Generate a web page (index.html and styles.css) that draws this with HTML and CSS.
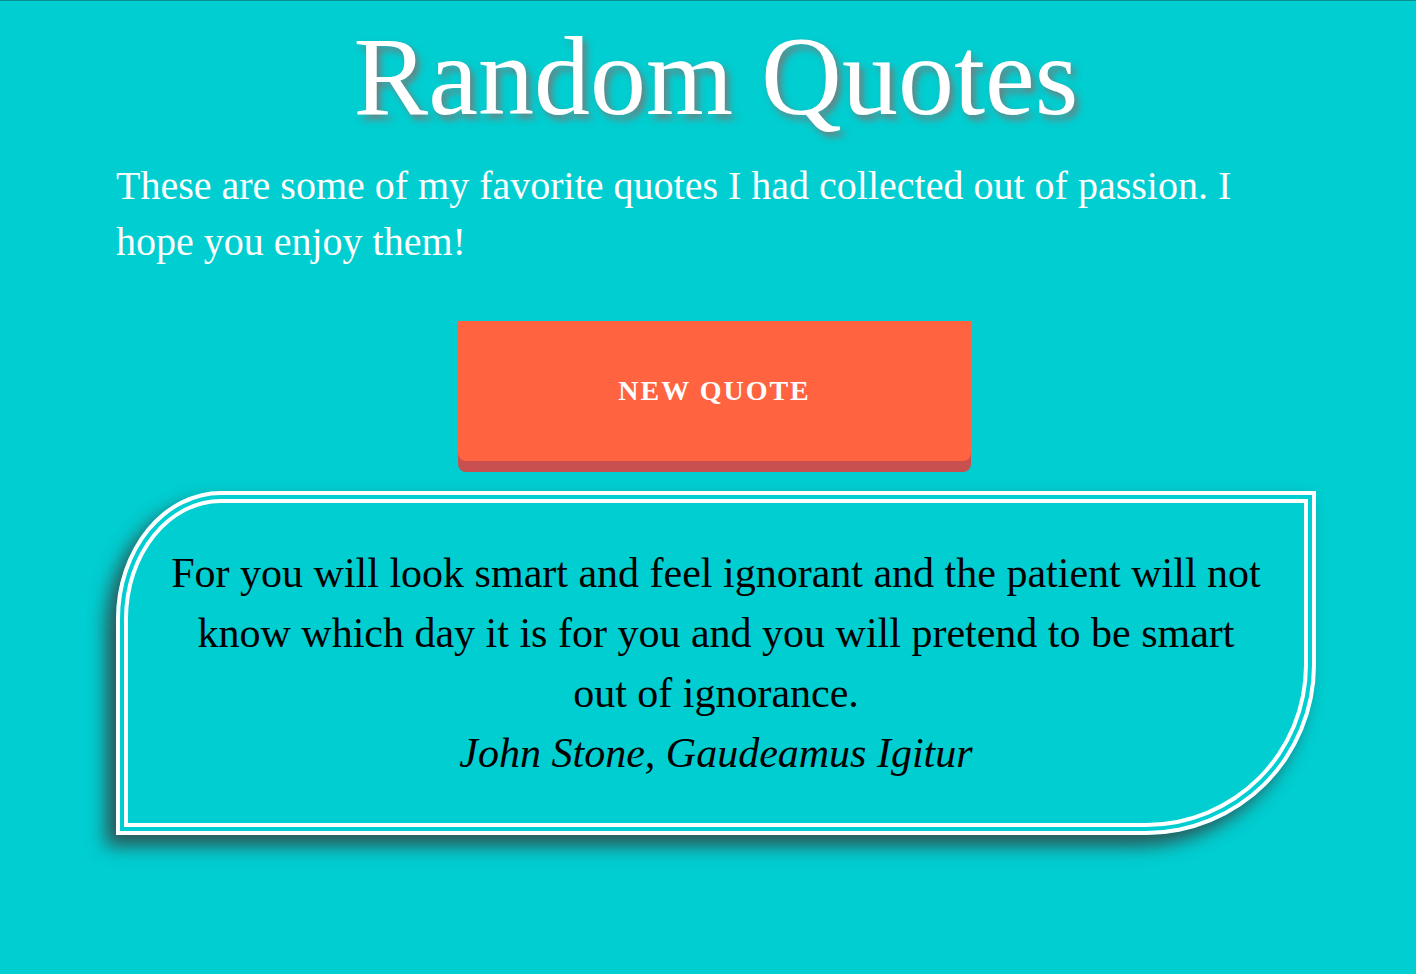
FILE: index.html
```html
<!DOCTYPE html>
<html lang="en">
<head>
<meta charset="utf-8">
<title>Random Quotes</title>
<link rel="stylesheet" href="styles.css">
</head>
<body>
<main class="page">
  <h1 class="title">Random Quotes</h1>
  <p class="intro">These are some of my favorite quotes I had collected out of passion. I hope you enjoy them!</p>
  <div class="actions">
    <button class="new-quote" type="button">NEW QUOTE</button>
  </div>
  <blockquote class="quote-box">
    <p class="quote-text">For you will look smart and feel ignorant and the patient will not know which day it is for you and you will pretend to be smart out of ignorance.</p>
    <p class="quote-author">John Stone, Gaudeamus Igitur</p>
  </blockquote>
</main>
</body>
</html>
```
FILE: styles.css
```css
html, body {
  margin: 0;
  padding: 0;
}

body {
  background: #00ced1;
  border-top: 1px solid #0a8f92;
  min-height: 973px;
  font-family: "Liberation Serif", "Times New Roman", serif;
  color: #ffffff;
}

.page {
  width: 1200px;
  margin: 0 auto;
  padding-left: 16px;
  display: flex;
  flex-direction: column;
}

.title {
  margin: 11px 0 0;
  font-size: 112px;
  line-height: 128px;
  font-weight: normal;
  text-align: center;
  color: #ffffff;
  text-shadow: 4px 5px 7px rgba(120, 120, 120, 0.9);
}

.intro {
  margin: 18px 0 0;
  max-width: 1160px;
  font-size: 40px;
  line-height: 56px;
}

.actions {
  display: flex;
  justify-content: center;
  margin-top: 51px;
  padding-right: 3px;
}

.new-quote {
  width: 513px;
  height: 140px;
  border: none;
  border-radius: 0 0 8px 8px;
  background: #ff6340;
  box-shadow: 0 11px 0 0 #c8504f;
  color: #ffffff;
  font-family: "Liberation Serif", "Times New Roman", serif;
  font-weight: bold;
  font-size: 28px;
  letter-spacing: 2px;
  cursor: pointer;
}

.quote-box {
  margin: 30px 0 0;
  padding: 40px;
  border: 12px double #ffffff;
  border-radius: 105px 0 170px 0 / 128px 0 170px 0;
  box-shadow: -10px 11px 18px rgba(55, 55, 55, 0.8);
  color: #000000;
  text-align: center;
  font-size: 42px;
  line-height: 60px;
}

.quote-text,
.quote-author {
  margin: 0;
}

.quote-author {
  font-style: italic;
}
```
